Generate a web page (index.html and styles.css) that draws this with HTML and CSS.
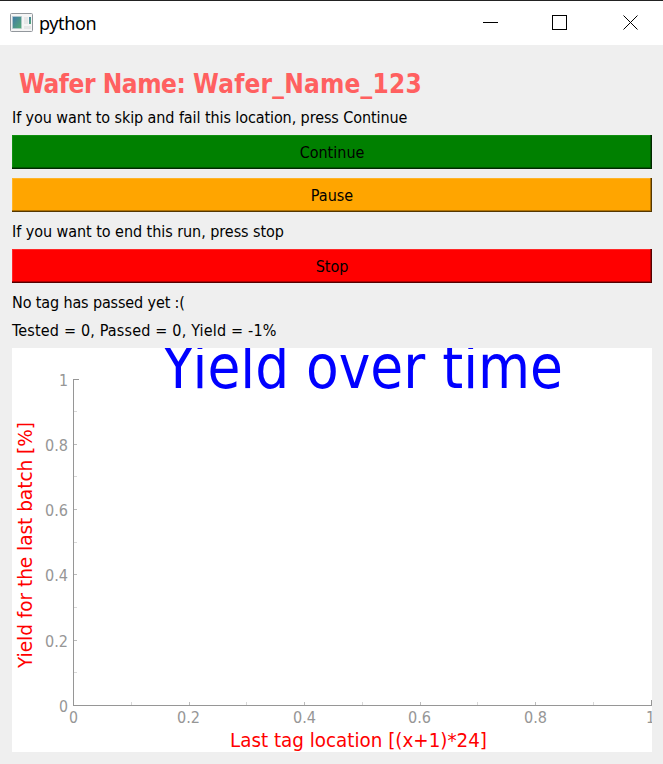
FILE: index.html
```html
<!DOCTYPE html>
<html lang="en">
<head>
<meta charset="utf-8">
<title>python</title>
<link rel="stylesheet" href="styles.css">
</head>
<body>
<header class="titlebar">
  <svg class="app-icon" width="23" height="19" viewBox="0 0 23 19">
    <defs><linearGradient id="g" x1="0" y1="0" x2="1" y2="1"><stop offset="0" stop-color="#4078a8"/><stop offset="1" stop-color="#56ad73"/></linearGradient></defs>
    <rect x=".5" y=".5" width="22" height="18" rx="1" fill="#f5f5f5" stroke="#92979c"/>
    <rect x="2.5" y="3.5" width="9" height="12" fill="url(#g)" stroke="#b9cbd0" stroke-width=".6"/>
    <path d="M14 4h4v7h-4zM14 13h7v3h-7z" fill="#e5e7e7"/>
    <rect x="19" y="4" width="2" height="7" fill="url(#g)"/>
  </svg>
  <span class="app-name">python</span>
  <svg class="controls" width="156" height="16" viewBox="0 0 156 16" shape-rendering="crispEdges">
    <path d="M0 7.5h15M69.500 .5h14v14h-14z" fill="none" stroke="#000"/>
    <path d="M140.500 .5l14 14M154.500 .5l-14 14" stroke="#000" shape-rendering="auto"/>
  </svg>
</header>
<main class="content">
  <h1 class="wafer">Wafer Name: <span class="wafer-id">Wafer_Name_123</span></h1>
  <p class="label skip">If you want to skip and fail this location, press Continue</p>
  <button class="button continue">Continue</button>
  <button class="button pause">Pause</button>
  <p class="label end">If you want to end this run, press stop</p>
  <button class="button stop">Stop</button>
  <p class="label status">No tag has passed yet :(</p>
  <p class="label stats">Tested = 0, Passed = 0, Yield = -1%</p>
  <svg class="plot" width="640" height="404" viewBox="12 348 640 404">
    <text class="plot-title" x="162" y="388" textLength="401" lengthAdjust="spacingAndGlyphs">Yield over time</text>
    <g shape-rendering="crispEdges">
      <path class="minor" d="M74 411.500h3M74 476.500h3M74 542.500h3M74 607.500h3M74 672.500h3M131.500 702v3M246.500 702v3M362.500 702v3M477.500 702v3M593.500 702v3"/>
      <path class="major" d="M74 444.500h3M74 509.500h3M74 574.500h3M74 640.500h3M189.500 702v3M304.500 702v3M420.500 702v3M535.500 702v3"/>
      <path class="axis" d="M79 379.500h-5.500V705.500H651.500V700"/>
    </g>
    <g class="tick">
      <text x="59" y="386" textLength="9" lengthAdjust="spacingAndGlyphs">1</text>
      <text x="45" y="451" textLength="23" lengthAdjust="spacingAndGlyphs">0.8</text>
      <text x="45" y="516" textLength="23" lengthAdjust="spacingAndGlyphs">0.6</text>
      <text x="45" y="581" textLength="23" lengthAdjust="spacingAndGlyphs">0.4</text>
      <text x="45" y="647" textLength="23" lengthAdjust="spacingAndGlyphs">0.2</text>
      <text x="59" y="712" textLength="9" lengthAdjust="spacingAndGlyphs">0</text>
      <text x="69" y="723" textLength="9" lengthAdjust="spacingAndGlyphs">0</text>
      <text x="177" y="723" textLength="23" lengthAdjust="spacingAndGlyphs">0.2</text>
      <text x="293" y="723" textLength="23" lengthAdjust="spacingAndGlyphs">0.4</text>
      <text x="408" y="723" textLength="23" lengthAdjust="spacingAndGlyphs">0.6</text>
      <text x="524" y="723" textLength="23" lengthAdjust="spacingAndGlyphs">0.8</text>
      <text x="646" y="723" textLength="9" lengthAdjust="spacingAndGlyphs">1</text>
    </g>
    <text class="axis-label" x="230" y="747" textLength="257" lengthAdjust="spacingAndGlyphs">Last tag location [(x+1)*24]</text>
    <text class="axis-label" transform="translate(32 668) rotate(-90)" textLength="246" lengthAdjust="spacingAndGlyphs">Yield for the last batch [%]</text>
  </svg>
</main>
</body>
</html>
```
FILE: styles.css
```css
* { box-sizing: border-box; }
body {
  margin: 0;
  height: 764px;
  overflow: hidden;
  background: #efefef;
  color: #000;
  font-family: "DejaVu Sans Condensed", "DejaVu Sans", sans-serif;
  font-stretch: condensed;
  font-size: 16px;
}
.titlebar {
  display: flex;
  align-items: center;
  height: 45px;
  padding: 0 24px 0 10px;
  border-top: 1px solid #222;
  background: #fff;
}
.app-icon { margin-bottom: 2px; }
.app-name {
  margin-left: 6px;
  font: 18px/24px "Noto Sans", sans-serif;
  letter-spacing: -0.4px;
}
.controls { margin-left: auto; }
.content {
  display: flex;
  flex-direction: column;
  padding: 18px 11px 12px 12px;
}
.wafer {
  margin: 0;
  padding-left: 7px;
  font-size: 26px;
  line-height: 42px;
  letter-spacing: -0.45px;
  color: #ff6060;
  white-space: nowrap;
}
.wafer-id { letter-spacing: 0.2px; }
.label {
  margin: 0;
  line-height: 20px;
  white-space: nowrap;
}
.skip { margin-top: 3px; letter-spacing: -0.09px; }
.button {
  height: 34px;
  padding: 0;
  border: 0;
  font: inherit;
  color: #000;
}
.continue {
  margin-top: 7px;
  background: #008000;
  box-shadow: inset -1px -1px #002800, inset -2px -2px #005800, inset 1px 1px #109010;
}
.pause {
  margin-top: 9px;
  background: #ffa500;
  box-shadow: inset -1px -1px #553700, inset -2px -2px #b27300, inset 1px 1px #ffb528;
}
.end { margin-top: 10px; letter-spacing: -0.05px; }
.stop {
  margin-top: 7px;
  background: #f00;
  box-shadow: inset -1px -1px #500, inset -2px -2px #b20000, inset 1px 1px #ff2828;
}
.status { margin-top: 10px; letter-spacing: -0.13px; }
.stats { margin-top: 8px; letter-spacing: 0.18px; }
.plot {
  display: block;
  margin-top: 7px;
  background: #fff;
}
.plot-title { font-size: 60px; fill: #00f; }
.axis-label { font-size: 20px; fill: #f00; }
.tick { fill: #969696; }
.axis { fill: none; stroke: #969696; }
.major { stroke: #bcbcbc; }
.minor { stroke: #d8d8d8; }
```
